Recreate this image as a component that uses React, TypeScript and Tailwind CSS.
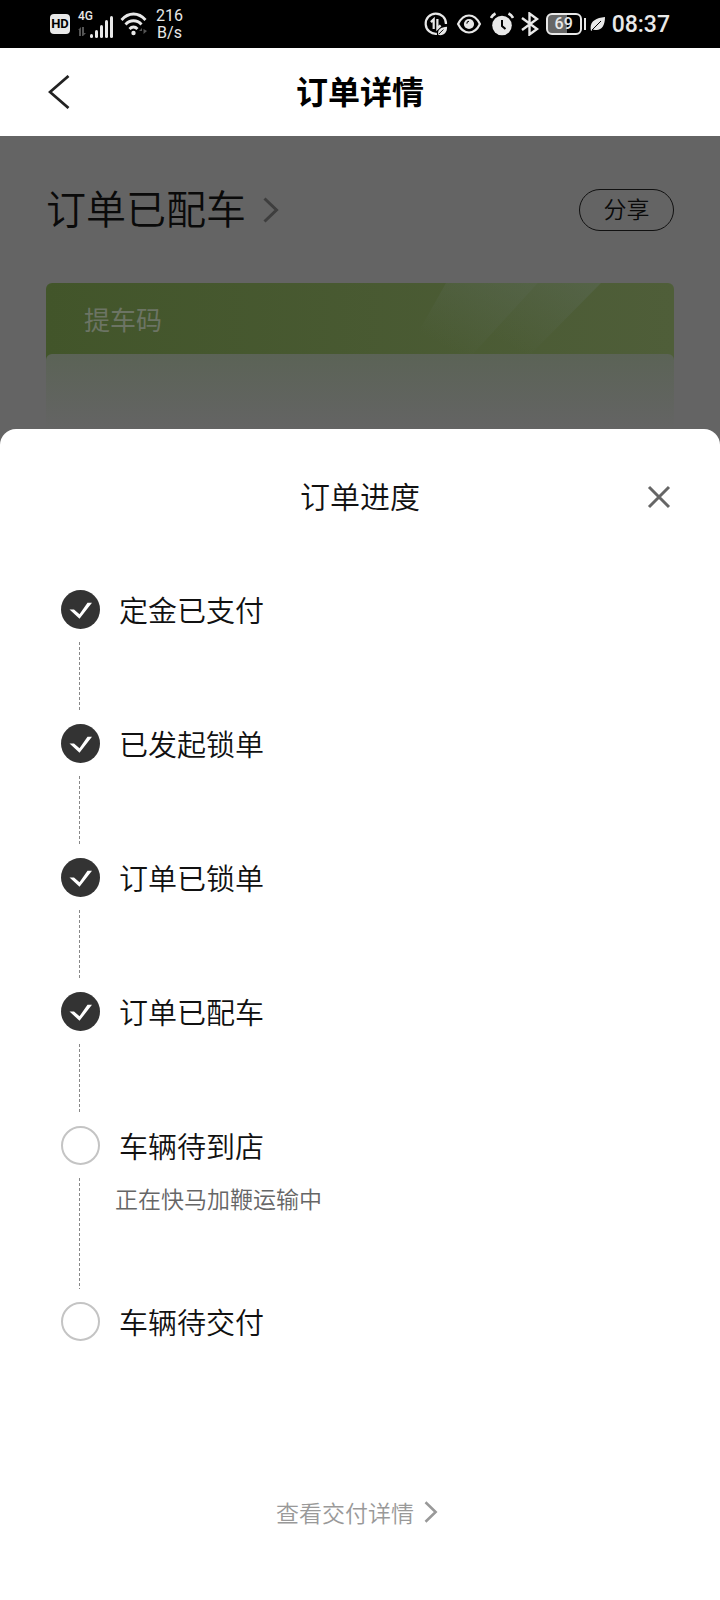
import type { ReactNode } from 'react';

interface Step {
  title: string;
  done: boolean;
  note?: string;
}

const steps: Step[] = [
  { title: '定金已支付', done: true },
  { title: '已发起锁单', done: true },
  { title: '订单已锁单', done: true },
  { title: '订单已配车', done: true },
  { title: '车辆待到店', done: false, note: '正在快马加鞭运输中' },
  { title: '车辆待交付', done: false },
];

function StatusBar() {
  return (
    <div className="flex h-12 items-center justify-between bg-black px-[50px] font-['Roboto',sans-serif] text-[#e8e8e8]">
      <div className="flex items-center">
        <span className="flex h-5 w-5 items-center justify-center rounded-sm bg-[#e8e8e8] text-[13px] font-bold text-black">HD</span>
        <div className="ml-1 flex flex-col">
          <span className="ml-1 -mb-2 text-xs leading-4 font-medium">4G</span>
          <svg viewBox="0 0 40 24" className="h-6 w-10" fill="currentColor">
            <path d="M4 14 7 11v9H5v-6zM8 11h2v6h2l-3 3H8z" fill="#555" />
            <rect x="16" y="18" width="3" height="4" rx="1.5" />
            <rect x="21" y="14" width="3" height="8" rx="1.5" />
            <rect x="26" y="9" width="3" height="13" rx="1.5" />
            <rect x="31" y="4" width="3" height="18" rx="1.5" />
            <rect x="36" y="0" width="3" height="22" rx="1.5" />
          </svg>
        </div>
        <svg viewBox="0 0 28 24" className="ml-1.5 h-6 w-7" fill="none" stroke="currentColor" strokeWidth="2.8">
          <path d="M1.5 8C8.5 0 18.5 0 25.5 8" />
          <path d="M5.5 12.5c4.5-5 11.5-5 16 0" />
          <path d="M9.5 17c2.5-2.7 5.5-2.7 8 0" />
          <circle cx="13.5" cy="21" r="2.2" fill="currentColor" stroke="none" />
          <path d="M19 19h3v-3zM23.5 17v5l3.5-3z" fill="#555" stroke="none" />
        </svg>
        <div className="ml-2 text-center text-base leading-[17px]">
          <div>216</div>
          <div>B/s</div>
        </div>
      </div>

      <div className="flex items-center">
        <svg viewBox="0 0 26 26" className="size-6" fill="none" stroke="currentColor" strokeWidth="2.4">
          <path d="M14 23.6A11 11 0 1 1 23.8 13" />
          <path d="M7.5 11 10.5 8v10.5M14.5 7.5v10.5l3.5-3.5" />
          <path d="M15.5 25c-1.5-6 3-8.5 9.5-9 0 6-3 10-9.500 9z" fill="currentColor" stroke="none" />
          <path d="m16 24 5-5" stroke="#000" strokeWidth="1" />
        </svg>
        <svg viewBox="0 0 28 22" className="ml-2 h-5 w-[26px]" fill="none" stroke="currentColor" strokeWidth="2.4">
          <path d="M2 11C8-1.5 20-1.5 26 11 20 23.5 8 23.5 2 11z" />
          <circle cx="14" cy="11" r="5.6" fill="currentColor" stroke="none" />
          <path d="M11.5 10.5a3 3 0 0 1 2.5-2.5" stroke="#000" strokeWidth="1.2" />
        </svg>
        <svg viewBox="0 0 24 24" className="ml-2 size-6" fill="none" stroke="currentColor" strokeWidth="2.6">
          <circle cx="12" cy="13.5" r="9.8" fill="currentColor" stroke="none" />
          <path d="M1 6c1-2 2.5-3.5 4.5-4.5M23 6c-1-2-2.5-3.5-4.5-4.5" />
          <path d="M12 8v6l3.5 3" stroke="#000" strokeWidth="2" />
        </svg>
        <svg viewBox="0 0 20 24" className="ml-1.5 h-6 w-5" fill="none" stroke="currentColor" strokeWidth="2.4">
          <path d="m2 6 15 11-7.5 5.5v-21L17 7 2 18" />
        </svg>
        <div className="ml-1.5 flex items-center">
          <span className="flex h-[22px] w-9 items-center justify-center rounded-md border-2 border-[#e8e8e8] bg-linear-to-r from-[#666] from-60% to-black to-60% text-base font-medium">69</span>
          <span className="ml-0.5 h-3 w-[2px] bg-[#e8e8e8]" />
        </div>
        <svg viewBox="0 0 16 16" className="ml-1 size-4" fill="currentColor">
          <path d="M1 15C-1 6 5 2 15 1c0 9-4 15-12 12.5z" />
          <path d="M2 14 11 5" stroke="#000" strokeWidth="1" />
        </svg>
        <span className="ml-1.5 pt-0.5 text-[23px] font-medium">08:37</span>
      </div>
    </div>
  );
}

function StepMark({ done }: { done: boolean }) {
  if (!done) {
    return <span className="size-[39px] rounded-full border-2 border-[#c4c4c4]" />;
  }
  return (
    <svg viewBox="0 0 39 39" className="size-[39px]">
      <circle cx="19.5" cy="19.5" r="19.5" fill="#333" />
      <path d="M8.5 19.500h4.500l5.500 4.800L26.500 12.800h4.500L18.500 28.800z" fill="#fff" />
    </svg>
  );
}

function Chevron({ className }: { className: string }) {
  return (
    <svg viewBox="0 0 16 26" className={className} fill="none" stroke="currentColor" strokeWidth="3">
      <path d="m1.5 1.5 12 11.5-12 11.5" />
    </svg>
  );
}

function StepRow({ step, last }: { step: Step; last: boolean }) {
  return (
    <li className="flex gap-[19px]">
      <div className="flex flex-col items-center">
        <StepMark done={step.done} />
        {!last && (
          <svg className={`my-[13px] mr-0.5 w-px ${step.note ? 'h-[111px]' : 'h-[69px]'}`}>
            <line x1="0.5" x2="0.5" y1="0" y2="111" stroke="#888" strokeDasharray="3 2" />
          </svg>
        )}
      </div>
      <div>
        <h3 className="text-[29px] leading-[38px] font-[350] text-[#111]">{step.title}</h3>
        {step.note && <p className="mt-[18px] -ml-1 text-[23px] leading-8 font-[350] text-[#666]">{step.note}</p>}
      </div>
    </li>
  );
}

function Sheet({ children }: { children: ReactNode }) {
  return (
    <section className="flex flex-1 flex-col rounded-t-2xl bg-white">
      <div className="relative mt-11 flex items-center justify-center">
        <h2 className="text-[30px] leading-11 font-[350] text-[#111]">订单进度</h2>
        <button aria-label="关闭" className="absolute right-[49px] cursor-pointer pt-1 text-[#666]">
          <svg viewBox="0 0 24 24" className="size-6" fill="none" stroke="currentColor" strokeWidth="3">
            <path d="m2 2 20 20M22 2 2 22" />
          </svg>
        </button>
      </div>
      {children}
    </section>
  );
}

export default function App() {
  return (
    <div className="flex min-h-screen flex-col bg-[#646464] font-['Noto_Sans_CJK_SC',sans-serif]">
      <StatusBar />

      {/* Header */}
      <header className="relative flex h-[88px] items-center justify-center bg-white">
        <button aria-label="返回" className="absolute left-12 cursor-pointer text-[#222]">
          <svg viewBox="0 0 22 34" className="h-[34px] w-[22px]" fill="none" stroke="currentColor" strokeWidth="2.8">
            <path d="M20.5 1 2 17l18.5 16" />
          </svg>
        </button>
        <h1 className="pb-1 text-[32px] font-bold text-black">订单详情</h1>
      </header>

      {/* Dimmed order page */}
      <main className="px-[46px] pt-11">
        <div className="flex h-[60px] items-center justify-between">
          <a href="#progress" className="flex items-center gap-4 text-[40px] leading-none font-[350] text-[#0a0a0a]">
            <span className="pb-1.5">订单已配车</span>
            <Chevron className="h-[26px] w-[18px] text-[#3e3e3e]" />
          </a>
          <button className="h-[42px] w-[95px] cursor-pointer rounded-full border border-[#111] pb-1 text-[23px] leading-none font-[350] text-[#0a0a0a]">
            分享
          </button>
        </div>
        <div className="relative mt-[43px] overflow-hidden rounded-t-md bg-linear-to-r from-[#42552a] to-[#4f5e39]">
          <svg viewBox="0 0 628 71" preserveAspectRatio="none" className="absolute inset-x-0 top-0 h-[71px] w-full">
            <defs>
              <linearGradient id="shine" x1="0" y1="1" x2="1" y2="0">
                <stop offset="0.2" stopColor="#5c6a58" stopOpacity="0" />
                <stop offset="1" stopColor="#5c6a58" stopOpacity="0.5" />
              </linearGradient>
            </defs>
            <path d="M360 71 400 0h92l-65 71z" fill="url(#shine)" />
            <path d="M427 71 492 0h63l-70 71z" fill="url(#shine)" />
          </svg>
          <h2 className="relative pl-[38px] text-[26px] leading-[71px] text-[#6c7464]">提车码</h2>
          <div className="relative h-[75px] rounded-t-md bg-linear-to-b from-[#5b6356] to-[#646464]" />
        </div>
      </main>

      <Sheet>
        <ol id="progress" className="mt-[73px] pr-12 pl-[61px]">
          {steps.map((step, i) => (
            <StepRow key={step.title} step={step} last={i === steps.length - 1} />
          ))}
        </ol>
        <div className="mt-auto flex justify-center pr-1.5 pb-[72px]">
          <a href="#delivery" className="flex items-center gap-2.5 text-[23px] leading-8 font-[350] text-[#999]">
            查看交付详情
            <Chevron className="h-[22px] w-3.5" />
          </a>
        </div>
      </Sheet>
    </div>
  );
}
